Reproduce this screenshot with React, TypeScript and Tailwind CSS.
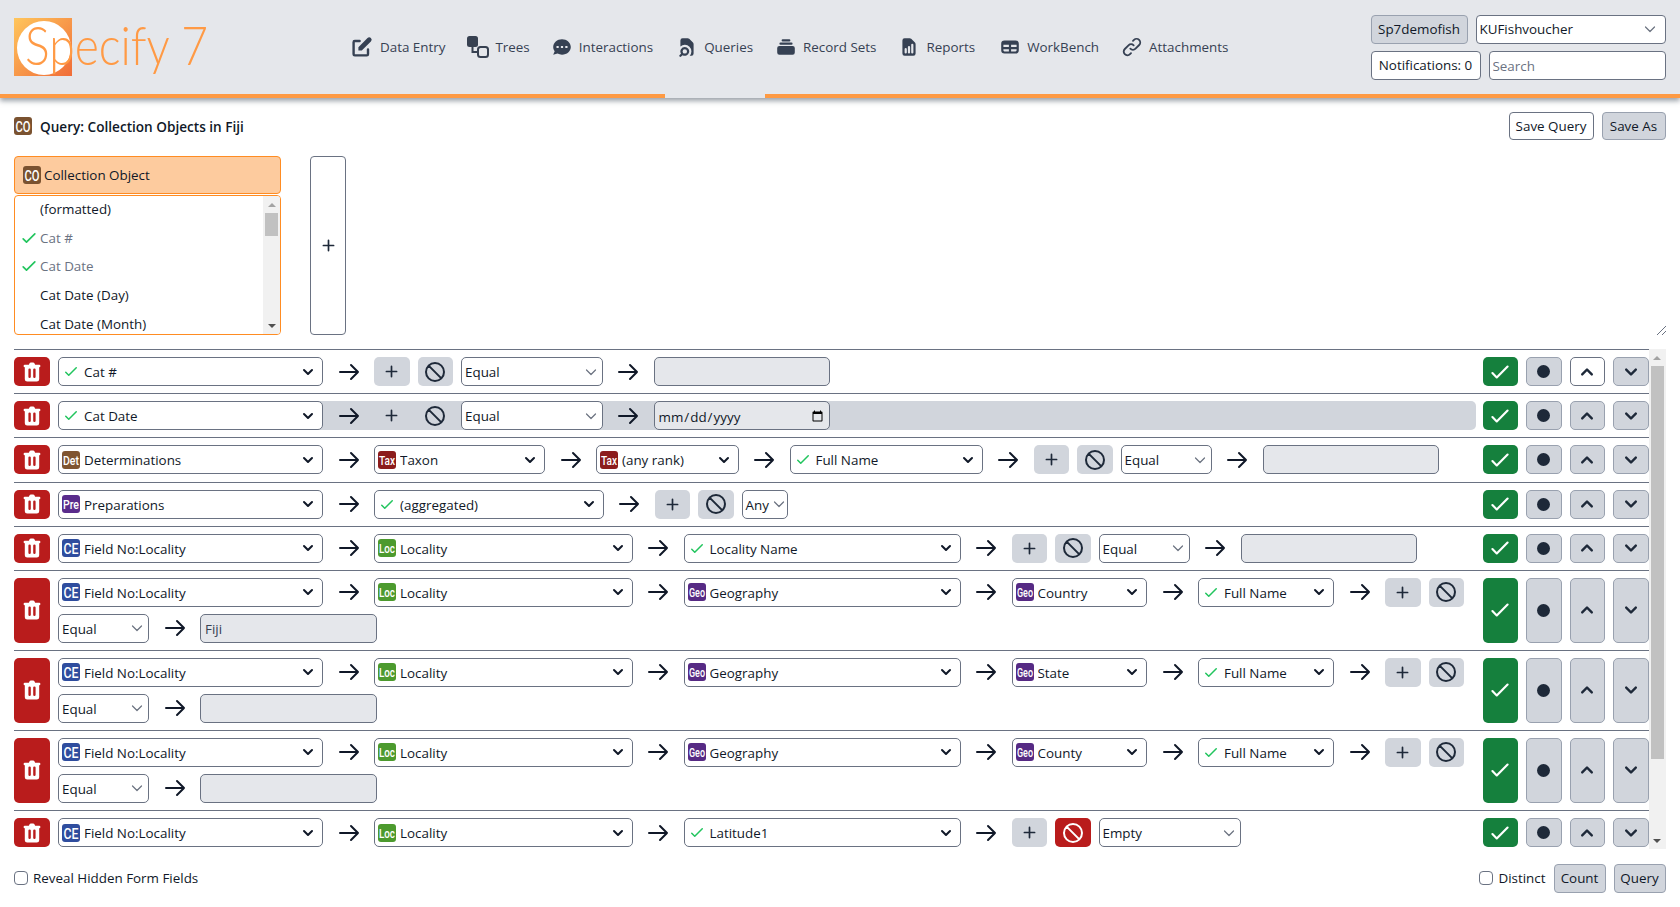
import type { ReactNode } from "react";

const SOLID: Record<string, string> = {
  pencil: "M17.414 2.586a2 2 0 00-2.828 0L7 10.172V13h2.828l7.586-7.586a2 2 0 000-2.828zM2 6a2 2 0 012-2h4a1 1 0 010 2H4v10h10v-4a1 1 0 112 0v4a2 2 0 01-2 2H4a2 2 0 01-2-2V6z",
  chat: "M18 10c0 3.866-3.582 7-8 7a8.841 8.841 0 01-4.083-.98L2 17l1.338-3.123C2.493 12.767 2 11.434 2 10c0-3.866 3.582-7 8-7s8 3.134 8 7zM7 9H5v2h2V9zm8 0h-2v2h2V9zM9 9h2v2H9V9z",
  search: "M4 4a2 2 0 012-2h4.586A2 2 0 0112 2.586L15.414 6A2 2 0 0116 7.414V16a2 2 0 01-2 2h-1.528A6 6 0 004 9.528V4zM8 10a4 4 0 00-3.446 6.032l-1.261 1.26a1 1 0 101.414 1.415l1.261-1.261A4 4 0 108 10zm-2 4a2 2 0 114 0 2 2 0 01-4 0z",
  sets: "M7 3a1 1 0 000 2h6a1 1 0 100-2H7zM4 7a1 1 0 011-1h10a1 1 0 110 2H5a1 1 0 01-1-1zM2 11a2 2 0 012-2h12a2 2 0 012 2v4a2 2 0 01-2 2H4a2 2 0 01-2-2v-4z",
  report: "M6 2a2 2 0 00-2 2v12a2 2 0 002 2h8a2 2 0 002-2V7.414A2 2 0 0015.414 6L12 2.586A2 2 0 0010.586 2H6zm2 10a1 1 0 10-2 0v3a1 1 0 102 0v-3zm2-3a1 1 0 011 1v5a1 1 0 11-2 0v-5a1 1 0 011-1zm4-1a1 1 0 10-2 0v7a1 1 0 102 0V8z",
  table: "M5 4a3 3 0 00-3 3v6a3 3 0 003 3h10a3 3 0 003-3V7a3 3 0 00-3-3H5zm-1 9v-1h5v2H5a1 1 0 01-1-1zm7 1h4a1 1 0 001-1v-1h-5v2zm0-4h5V8h-5v2zM9 8H4v2h5V8z",
  trash: "M9 2a1 1 0 00-.894.553L7.382 4H4a1 1 0 000 2v10a2 2 0 002 2h8a2 2 0 002-2V6a1 1 0 100-2h-3.382l-.724-1.447A1 1 0 0011 2H9zM7 8a1 1 0 012 0v6a1 1 0 11-2 0V8zm5-1a1 1 0 00-1 1v6a1 1 0 102 0V8a1 1 0 00-1-1z",
  plus: "M10 3a1 1 0 011 1v5h5a1 1 0 110 2h-5v5a1 1 0 11-2 0v-5H4a1 1 0 110-2h5V4a1 1 0 011-1z",
  up: "M14.707 12.707a1 1 0 01-1.414 0L10 9.414l-3.293 3.293a1 1 0 01-1.414-1.414l4-4a1 1 0 011.414 0l4 4a1 1 0 010 1.414z",
  down: "M5.293 7.293a1 1 0 011.414 0L10 10.586l3.293-3.293a1 1 0 111.414 1.414l-4 4a1 1 0 01-1.414 0l-4-4a1 1 0 010-1.414z",
};

const OUTLINE: Record<string, string> = {
  link: "M13.828 10.172a4 4 0 00-5.656 0l-4 4a4 4 0 105.656 5.656l1.102-1.101m-.758-4.899a4 4 0 005.656 0l4-4a4 4 0 00-5.656-5.656l-1.1 1.1",
  ban: "M18.364 18.364A9 9 0 005.636 5.636m12.728 12.728A9 9 0 015.636 5.636m12.728 12.728L5.636 5.636",
  arrow: "M14 5l7 7m0 0l-7 7m7-7H3",
  check: "M5 13l4 4L19 7",
};

function Solid({ name, size, className }: { name: string; size: number; className?: string }) {
  return (
    <svg width={size} height={size} viewBox="0 0 20 20" fill="currentColor" className={className}>
      <path fillRule="evenodd" clipRule="evenodd" d={SOLID[name]} />
    </svg>
  );
}

function Outline({ name, size, className }: { name: string; size: number; className?: string }) {
  return (
    <svg width={size} height={size} viewBox="0 0 24 24" fill="none" stroke="currentColor" strokeWidth={2} strokeLinecap="round" strokeLinejoin="round" className={className}>
      <path d={OUTLINE[name]} />
    </svg>
  );
}

const TABLE_ICONS: Record<string, string> = {
  CO: "#7a5230",
  Det: "#7f5430",
  Tax: "#8c1c1c",
  Pre: "#5a2c8c",
  CE: "#2f4d9e",
  Loc: "#4c9a2e",
  Geo: "#562a84",
};

function TableIcon({ code }: { code: string }) {
  const short = code.length === 2;
  return (
    <svg width="18" height="18" viewBox="0 0 18 18" className="shrink-0 overflow-visible">
      <rect width="18" height="18" rx="3" fill={TABLE_ICONS[code]} />
      <text
        x="9"
        y={short ? 14.5 : 14}
        textAnchor="middle"
        fill="#ffffff"
        fontFamily="Roboto, sans-serif"
        fontWeight="500"
        fontSize={short ? 15 : 13.5}
        textLength={short ? 15 : 16}
        lengthAdjust="spacingAndGlyphs"
      >
        {code}
      </text>
    </svg>
  );
}

function TreesIcon() {
  return (
    <svg width="22" height="22" viewBox="0 0 22 22" className="shrink-0">
      <rect x="0" y="0" width="11" height="11" rx="2.5" fill="#374151" />
      <rect x="11" y="11" width="10" height="10" rx="2.5" fill="none" stroke="#374151" strokeWidth="2" />
      <path d="M5.5 11v5H11" fill="none" stroke="#374151" strokeWidth="2" />
    </svg>
  );
}

function Logo() {
  return (
    <svg width="196" height="60" viewBox="0 0 196 60" className="shrink-0 overflow-visible">
      <defs>
        <linearGradient id="logoBg" x1="0" y1="0" x2="1" y2="1">
          <stop offset="0" stopColor="#ffc65c" />
          <stop offset="1" stopColor="#f06c38" />
        </linearGradient>
      </defs>
      <rect width="58" height="58" fill="url(#logoBg)" />
      <circle cx="30" cy="30" r="27" fill="#ffffff" />
      <text x="11" y="47" fill="#ff9a45" fontFamily="Lato, sans-serif" fontWeight="300" fontSize="54" textLength="183" lengthAdjust="spacingAndGlyphs">
        Specify 7
      </text>
    </svg>
  );
}

const NAV = [
  { label: "Data Entry", pad: "pl-[10px]", icon: <Solid name="pencil" size={24} /> },
  { label: "Trees", pad: "pl-[10px]", icon: <TreesIcon /> },
  { label: "Interactions", pad: "pl-[9px]", icon: <Solid name="chat" size={22} /> },
  { label: "Queries", pad: "pl-[11px]", icon: <Solid name="search" size={22} /> },
  { label: "Record Sets", pad: "pl-[10px]", icon: <Solid name="sets" size={22} /> },
  { label: "Reports", pad: "pl-[10px]", icon: <Solid name="report" size={22} /> },
  { label: "WorkBench", pad: "pl-[12px]", icon: <Solid name="table" size={22} /> },
  { label: "Attachments", pad: "pl-[10px]", icon: <Outline name="link" size={22} /> },
];

function Header() {
  return (
    <header className="flex h-[98px] shrink-0 items-stretch border-b-4 border-[#fe9a43] bg-gray-200 shadow-[0_3px_5px_rgba(75,85,99,0.55)]">
      <div className="ml-[14px] mt-[18px] w-[196px]">
        <Logo />
      </div>
      <nav className="ml-[130px] -mb-1 flex items-stretch text-gray-700">
        {NAV.map((item) => (
          <a
            key={item.label}
            className={`flex items-center gap-[6px] pb-1 pr-3 ${item.pad} ${item.label === "Queries" ? "bg-gray-200" : ""}`}
          >
            {item.icon}
            <span className="pt-px">{item.label}</span>
          </a>
        ))}
      </nav>
      <div className="ml-auto mr-[14.5px] flex w-[295px] flex-col justify-center gap-[7px]">
        <div className="flex gap-2">
          <button className="h-[29px] w-[97px] rounded border border-gray-400 bg-gray-300 pt-px">Sp7demofish</button>
          <button className="flex h-[29px] flex-1 items-center justify-between rounded border border-gray-500 bg-white pl-[3px] pr-[5px]">
            <span className="pt-px">KUFishvoucher</span>
            <Chevron />
          </button>
        </div>
        <div className="flex gap-2">
          <button className="h-[29px] w-[110px] shrink-0 rounded border border-gray-500 bg-white pt-px">Notifications: 0</button>
          <input placeholder="Search" className="h-[29px] min-w-0 flex-1 rounded border border-gray-500 bg-white px-[3px] pt-px placeholder:text-gray-500" />
        </div>
      </div>
    </header>
  );
}

function Chevron() {
  return (
    <svg width="20" height="20" viewBox="0 0 20 20" fill="none" stroke="#6b7280" strokeWidth="1.2" strokeLinecap="round" strokeLinejoin="round" className="shrink-0">
      <path d="M5.5 8l4.5 4.5L14.5 8" />
    </svg>
  );
}

function Scrollbar({ className, thumb }: { className: string; thumb: string }) {
  return (
    <div className={`flex shrink-0 flex-col items-center bg-[#f1f1f1] ${className}`}>
      <div className="flex h-[17px] shrink-0 items-center justify-center">
        <div className="h-0 w-0 border-x-[4px] border-b-[4px] border-x-transparent border-b-[#a3a3a3]" />
      </div>
      <div className={`w-[13px] shrink-0 bg-[#c1c1c1] ${thumb}`} />
      <div className="mt-auto flex h-[17px] shrink-0 items-center justify-center">
        <div className="h-0 w-0 border-x-[4px] border-t-[4px] border-x-transparent border-t-[#505050]" />
      </div>
    </div>
  );
}

const FIELDS = [
  { label: "(formatted)" },
  { label: "Cat #", used: true },
  { label: "Cat Date", used: true },
  { label: "Cat Date (Day)" },
  { label: "Cat Date (Month)" },
];

function FieldPicker() {
  return (
    <div className="flex w-[267px] shrink-0 flex-col gap-px">
      <div className="flex h-[38px] shrink-0 items-center gap-[3px] rounded border border-[#ff8c22] bg-[#fdcb9e] pl-[8px]">
        <TableIcon code="CO" />
        <span>Collection Object</span>
      </div>
      <div className="flex h-[140px] overflow-hidden rounded border border-[#ff8c22] bg-white">
        <ul className="-mt-[1.5px] flex-1">
          {FIELDS.map((field) => (
            <li key={field.label} className="flex h-[28.8px] items-center pl-1">
              <span className="flex w-[21px] shrink-0 justify-start text-[#22c55e]">
                {field.used && <Outline name="check" size={20} />}
              </span>
              <span className={field.used ? "text-gray-500" : ""}>{field.label}</span>
            </li>
          ))}
        </ul>
        <Scrollbar className="w-[17px]" thumb="h-[23px]" />
      </div>
    </div>
  );
}

function Arrow() {
  return (
    <div className="flex h-[29px] w-[35px] shrink-0 items-center justify-center text-gray-900">
      <Outline name="arrow" size={24} />
    </div>
  );
}

function Select({ w, icon, check, label }: { w: string; icon?: string; check?: boolean; label: string }) {
  return (
    <button className={`flex h-[29px] shrink-0 items-center gap-1 rounded-[5px] border border-gray-500 bg-white pl-[3px] pr-[4px] text-left ${w}`}>
      {icon && <TableIcon code={icon} />}
      {check && (
        <span className="flex w-[18px] shrink-0 justify-center text-[#22c55e]">
          <Outline name="check" size={21} />
        </span>
      )}
      <span className="flex-1 truncate pt-px">{label}</span>
      <Solid name="down" size={20} className="shrink-0 text-gray-900" />
    </button>
  );
}

function Operator({ w, label }: { w: string; label: string }) {
  return (
    <button className={`flex h-[29px] shrink-0 items-center justify-between rounded-[5px] border border-gray-500 bg-white pl-[3px] pr-px text-left ${w}`}>
      <span className="pt-px">{label}</span>
      <Chevron />
    </button>
  );
}

function Value({ text, hover }: { text?: string; hover?: boolean }) {
  if (hover) {
    return <input type="date" className="h-[29px] w-[176.5px] shrink-0 rounded-[5px] border border-gray-500 bg-gray-200 px-[3px] pt-[2px]" />;
  }
  return <input readOnly value={text ?? ""} className="h-[29px] w-[176.5px] shrink-0 rounded-[5px] border border-gray-500 bg-gray-200 px-1 pt-px text-gray-700" />;
}

function Toggles({ negated, bare }: { negated?: boolean; bare?: boolean }) {
  const base = "flex h-[29px] w-[35.5px] shrink-0 items-center justify-center rounded-[5px]";
  return (
    <>
      <button className={`${base} ${bare ? "" : "bg-gray-300"} text-gray-800`}>
        <Solid name="plus" size={17} />
      </button>
      <button className={`${base} ${negated ? "bg-[#b91c1c] text-white" : bare ? "text-gray-800" : "bg-gray-300 text-gray-800"}`}>
        <Outline name="ban" size={24} />
      </button>
    </>
  );
}

function Actions({ upWhite }: { upWhite?: boolean }) {
  const gray = "flex w-[35.5px] items-center justify-center rounded-[5px] border border-gray-400 bg-gray-300 text-gray-800";
  return (
    <div className="ml-[7px] flex shrink-0 gap-2 self-stretch">
      <button className="flex w-[35.5px] items-center justify-center rounded-[5px] bg-[#15803d] text-white">
        <Outline name="check" size={26} />
      </button>
      <button className={gray}>
        <span className="h-[13px] w-[13px] rounded-full bg-gray-800" />
      </button>
      <button className={upWhite ? "flex w-[35.5px] items-center justify-center rounded-[5px] border border-gray-500 bg-white text-gray-800" : gray}>
        <Solid name="up" size={24} />
      </button>
      <button className={gray}>
        <Solid name="down" size={24} />
      </button>
    </div>
  );
}

function Line({ children, hover, upWhite, wrapped }: { children: ReactNode; hover?: boolean; upWhite?: boolean; wrapped?: boolean }) {
  return (
    <li className={wrapped ? "flex border-t border-gray-500 py-[7px]" : "flex border-t border-gray-500 py-[7.1px]"}>
      <button className="mr-2 flex w-9 shrink-0 items-center justify-center rounded-[5px] bg-[#b91c1c] text-white">
        <Solid name="trash" size={24} />
      </button>
      <div className={hover ? "flex flex-1 flex-wrap gap-x-2 gap-y-[7px] rounded-[5px] bg-gray-300" : "flex flex-1 flex-wrap gap-x-2 gap-y-[7px]"}>
        {children}
      </div>
      <Actions upWhite={upWhite} />
    </li>
  );
}

function FieldNoLocality() {
  return (
    <>
      <Select w="w-[265px]" icon="CE" label="Field No:Locality" />
      <Arrow />
      <Select w="w-[258.5px]" icon="Loc" label="Locality" />
      <Arrow />
    </>
  );
}

function GeoLine({ rank, value }: { rank: string; value?: string }) {
  return (
    <Line wrapped>
      <FieldNoLocality />
      <Select w="w-[277px]" icon="Geo" label="Geography" />
      <Arrow />
      <Select w="w-[135.5px]" icon="Geo" label={rank} />
      <Arrow />
      <Select w="w-[136px]" check label="Full Name" />
      <Arrow />
      <Toggles />
      <Operator w="w-[91px]" label="Equal" />
      <Arrow />
      <Value text={value} />
    </Line>
  );
}

function QueryLines() {
  return (
    <div className="flex h-[500px] shrink-0">
      <ul className="min-w-0 flex-1 overflow-hidden">
        <Line upWhite>
          <Select w="w-[265px]" check label="Cat #" />
          <Arrow />
          <Toggles />
          <Operator w="w-[141.5px]" label="Equal" />
          <Arrow />
          <Value />
        </Line>
        <Line hover>
          <Select w="w-[265px]" check label="Cat Date" />
          <Arrow />
          <Toggles bare />
          <Operator w="w-[141.5px]" label="Equal" />
          <Arrow />
          <Value hover />
        </Line>
        <Line>
          <Select w="w-[265px]" icon="Det" label="Determinations" />
          <Arrow />
          <Select w="w-[171px]" icon="Tax" label="Taxon" />
          <Arrow />
          <Select w="w-[142.5px]" icon="Tax" label="(any rank)" />
          <Arrow />
          <Select w="w-[193px]" check label="Full Name" />
          <Arrow />
          <Toggles />
          <Operator w="w-[91px]" label="Equal" />
          <Arrow />
          <Value />
        </Line>
        <Line>
          <Select w="w-[265px]" icon="Pre" label="Preparations" />
          <Arrow />
          <Select w="w-[229.5px]" check label="(aggregated)" />
          <Arrow />
          <Toggles />
          <Operator w="w-[46px]" label="Any" />
        </Line>
        <Line>
          <FieldNoLocality />
          <Select w="w-[277px]" check label="Locality Name" />
          <Arrow />
          <Toggles />
          <Operator w="w-[91px]" label="Equal" />
          <Arrow />
          <Value />
        </Line>
        <GeoLine rank="Country" value="Fiji" />
        <GeoLine rank="State" />
        <GeoLine rank="County" />
        <Line>
          <FieldNoLocality />
          <Select w="w-[277px]" check label="Latitude1" />
          <Arrow />
          <Toggles negated />
          <Operator w="w-[142px]" label="Empty" />
        </Line>
      </ul>
      <Scrollbar className="w-[17px]" thumb="h-[393px]" />
    </div>
  );
}

export default function App() {
  return (
    <div className="flex h-screen flex-col overflow-hidden bg-white text-[13.4px] text-gray-900 [font-family:'Open_Sans',sans-serif]">
      <Header />
      <main className="flex flex-1 flex-col pl-[14px] pr-[14.5px] pt-[14px]">
        <div className="flex h-[28px] shrink-0 items-center gap-2">
          <TableIcon code="CO" />
          <h1 className="pt-[2px] text-[13.6px] font-semibold">Query: Collection Objects in Fiji</h1>
          <div className="ml-auto flex gap-2">
            <button className="h-[28px] w-[85px] rounded border border-gray-500 bg-white">Save Query</button>
            <button className="h-[28px] w-[64px] rounded border border-gray-400 bg-gray-300">Save As</button>
          </div>
        </div>
        <section className="mb-[14px] mt-4 flex h-[179px] shrink-0 gap-[29px]">
          <FieldPicker />
          <button className="flex w-9 items-center justify-center rounded border border-gray-500 text-gray-800">
            <Solid name="plus" size={17} />
          </button>
          <svg width="10" height="10" viewBox="0 0 10 10" className="ml-auto self-end text-gray-500" stroke="currentColor">
            <path d="M1 10L10 1M6 10l4-4" />
          </svg>
        </section>
        <QueryLines />
        <div className="mt-[15px] flex h-[29px] shrink-0 items-center gap-2">
          <label className="flex items-center gap-[5px]">
            <input type="checkbox" className="h-[14px] w-[14px] appearance-none rounded-sm border border-gray-500 bg-white" />
            Reveal Hidden Form Fields
          </label>
          <label className="ml-auto flex items-center gap-[5px]">
            <input type="checkbox" className="h-[14px] w-[14px] appearance-none rounded-sm border border-gray-500 bg-white" />
            Distinct
          </label>
          <button className="h-[29px] w-[52px] rounded border border-gray-400 bg-gray-300">Count</button>
          <button className="h-[29px] w-[52px] rounded border border-gray-400 bg-gray-300">Query</button>
        </div>
      </main>
    </div>
  );
}
